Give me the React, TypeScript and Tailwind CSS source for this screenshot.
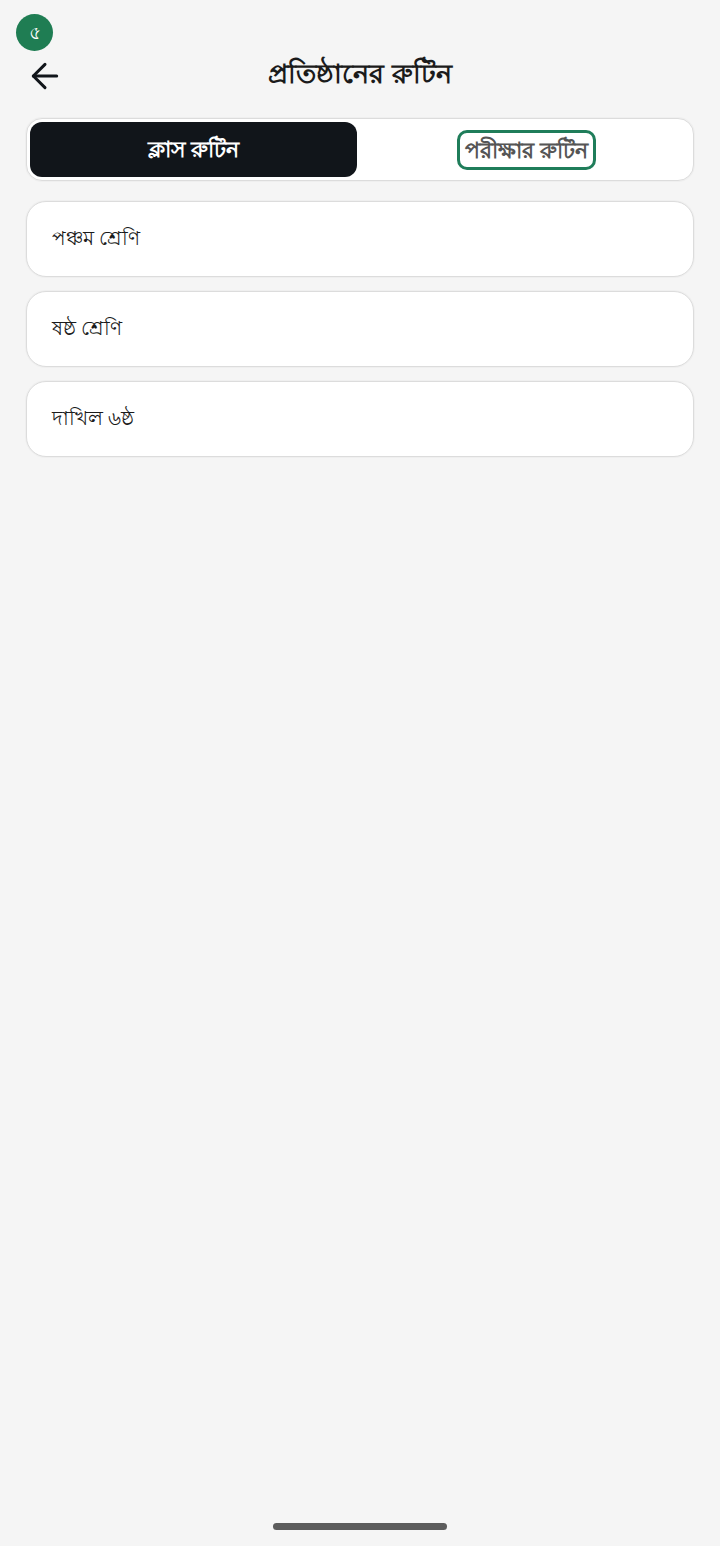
import { ArrowLeft } from 'lucide-react';

const classes = ['পঞ্চম শ্রেণি', 'ষষ্ঠ শ্রেণি', 'দাখিল ৬ষ্ঠ'];

export default function App() {
  return (
    <div className="w-[720px] h-[1546px] bg-[#f5f5f5] flex flex-col font-['Noto_Sans','Liberation_Sans',sans-serif]">
      <div className="pt-[14px] pl-[16px]">
        <div className="w-[37px] h-[37px] rounded-full bg-[#1f7d53] flex items-center justify-center text-white text-[19px]">৫</div>
      </div>

      <div className="relative h-[50px] flex items-center justify-center mt-[-2px]">
        <ArrowLeft className="absolute left-[25px] top-[7px] w-[40px] h-[40px] text-[#11151a]" strokeWidth={1.8} />
        <h1 className="text-[27px] font-bold text-[#1b1b1b] mb-[2px]">প্রতিষ্ঠানের রুটিন</h1>
      </div>

      <div className="mx-[26px] mt-[19px] h-[63px] p-[3px] bg-white border border-[#dcdcdc] shadow-[0_0_0_1px_#efefef] rounded-[16px] flex">
        <button className="w-[327px] rounded-[12px] bg-[#11151a] text-white text-[22px] font-bold flex items-center justify-center pb-[2px]">ক্লাস রুটিন</button>
        <div className="flex-1 flex items-center justify-center pl-[6px]">
          <button className="w-[139px] h-[40px] rounded-[10px] border-[3px] border-[#1f7d5a] text-[#555555] text-[22px] font-bold flex items-center justify-center whitespace-nowrap">পরীক্ষার রুটিন</button>
        </div>
      </div>

      <div className="mx-[26px] mt-[20px] flex flex-col gap-[14px]">
        {classes.map(c => (
          <div key={c} className="h-[76px] px-[25px] pb-[3px] bg-white border border-[#dcdcdc] shadow-[0_0_0_1px_#efefef] rounded-[20px] flex items-center text-[20px] font-medium text-[#1b1b1b]">
            {c}
          </div>
        ))}
      </div>

      <div className="mt-auto mb-[16px] mx-auto w-[174px] h-[7px] rounded-full bg-[#5c5c5c]" />
    </div>
  );
}
